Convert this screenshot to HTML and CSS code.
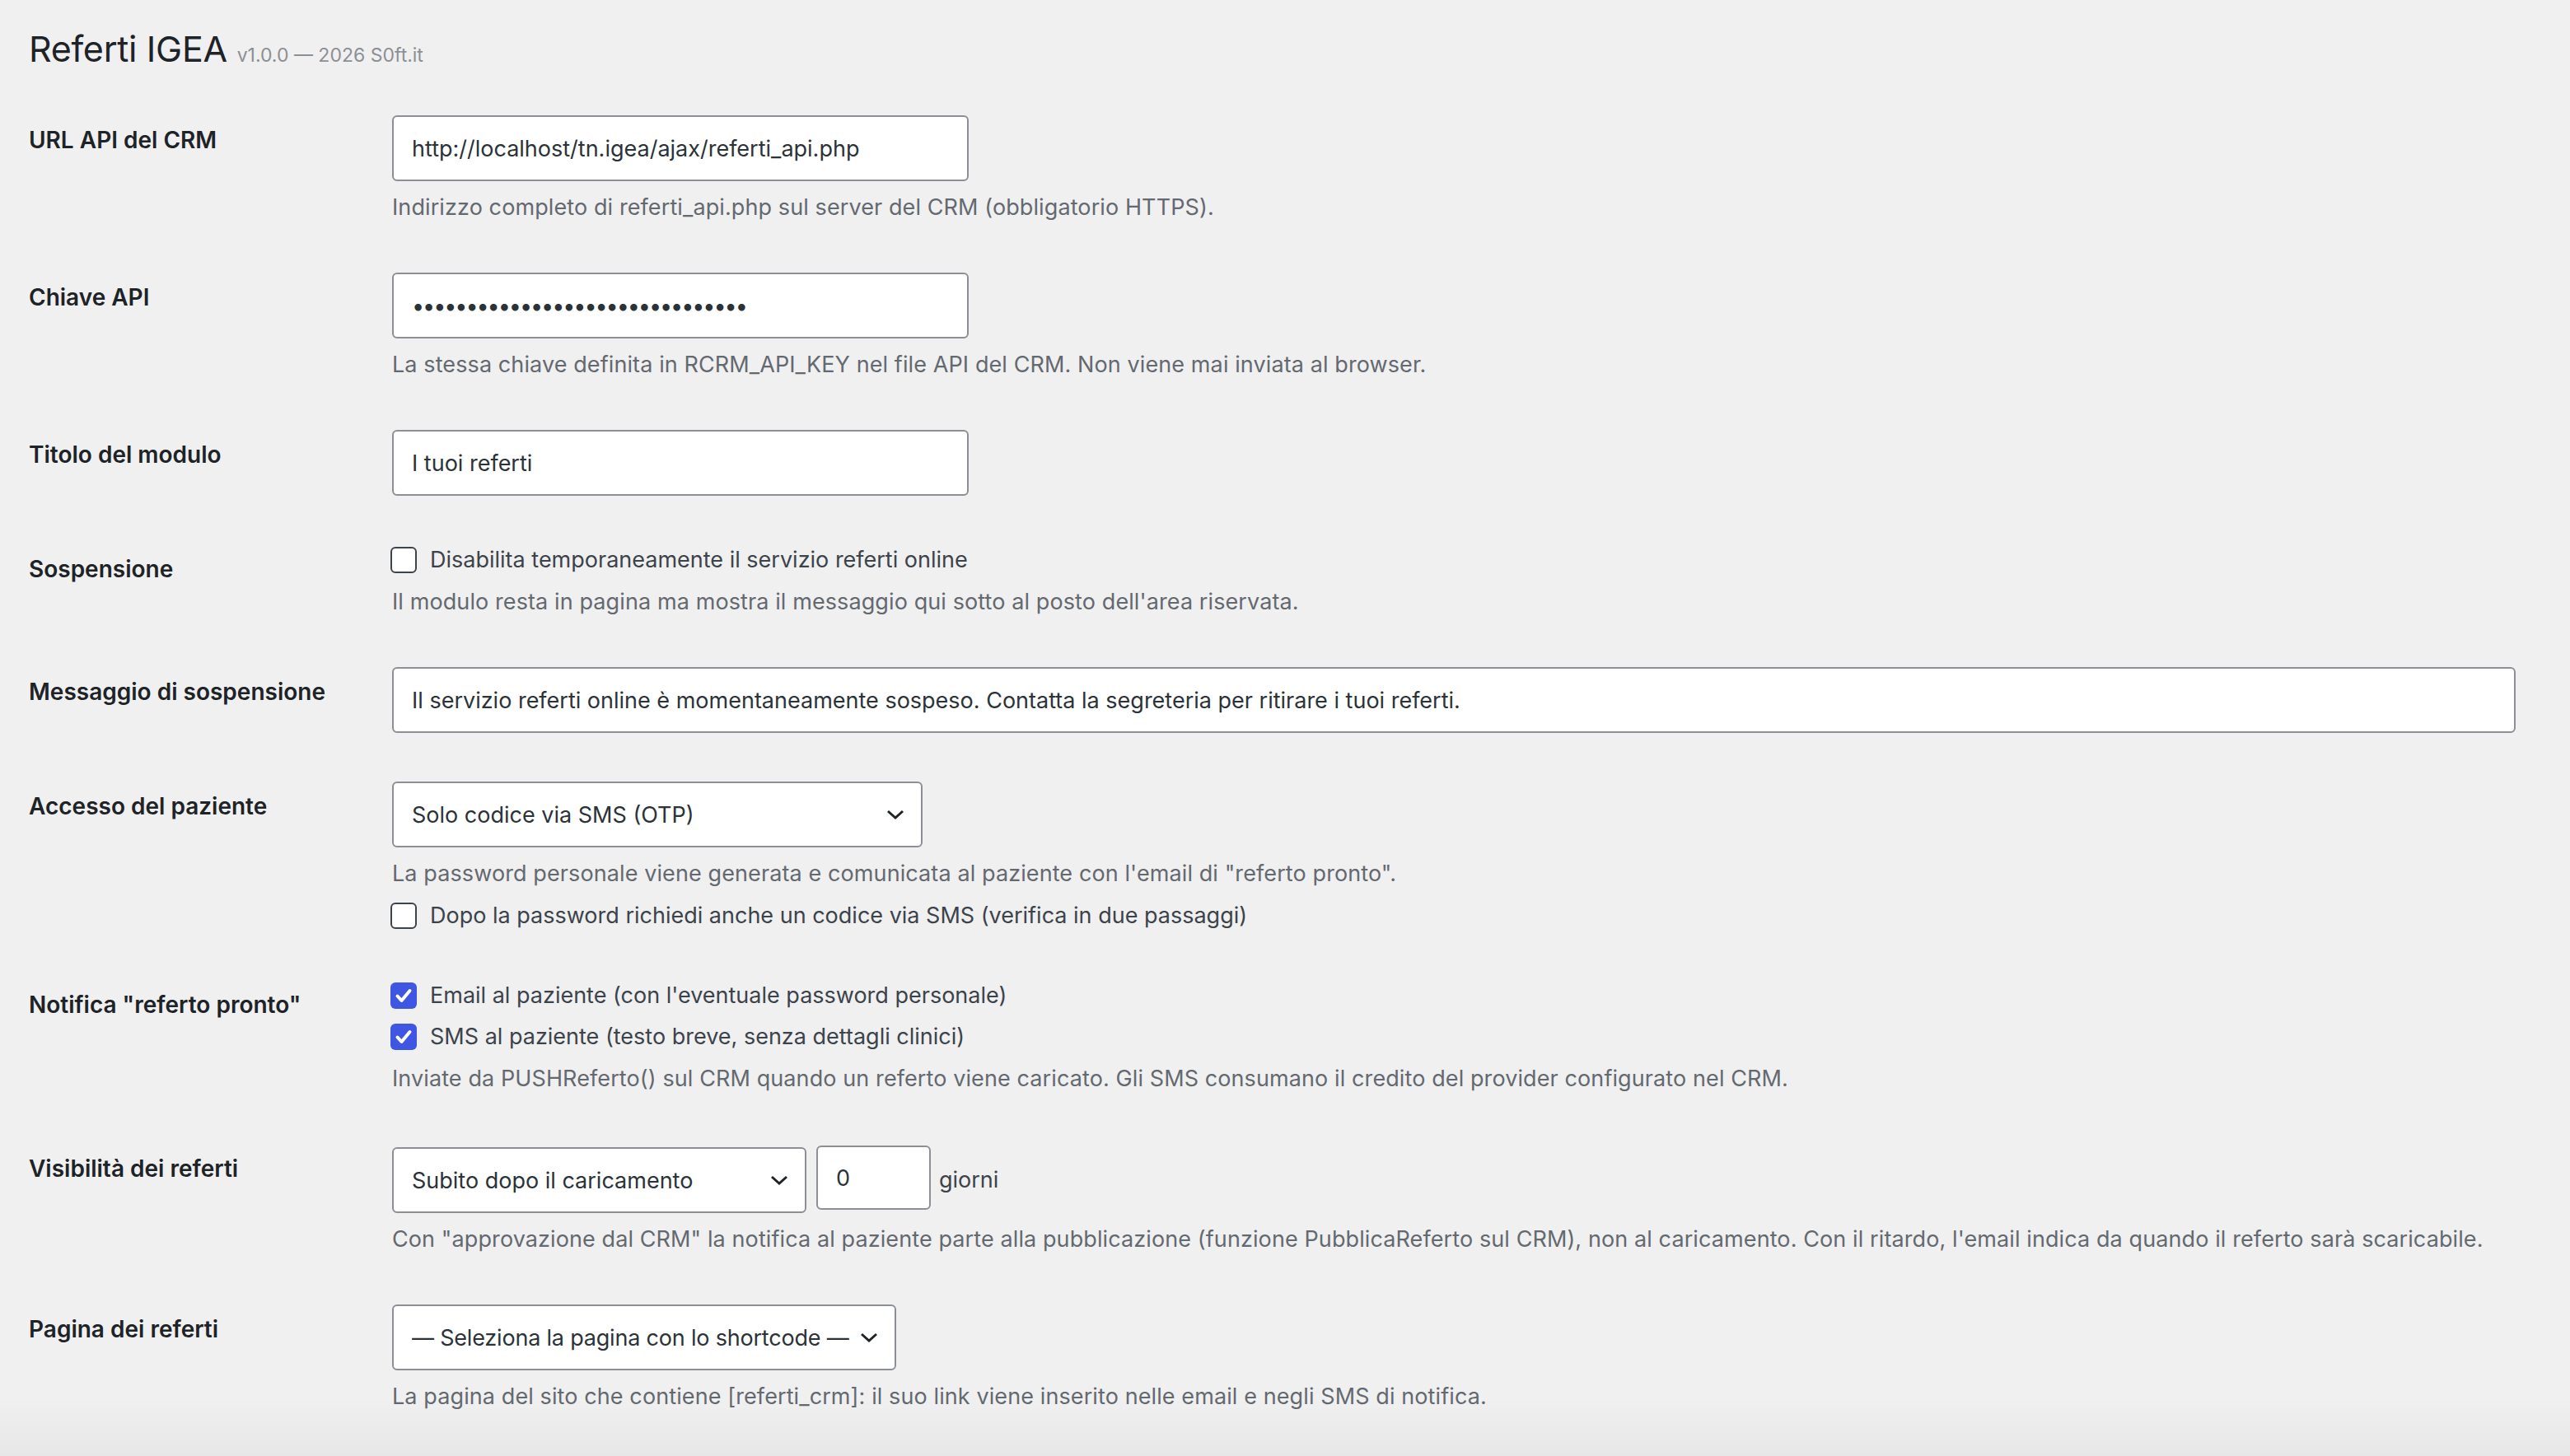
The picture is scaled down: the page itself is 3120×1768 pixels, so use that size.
FILE: index.html
```html
<!DOCTYPE html>
<html lang="it">
<head>
    <meta charset="UTF-8">
    <meta name="viewport" content="width=device-width, initial-scale=1.0">
    <title>Referti IGEA</title>
    <link rel="stylesheet" href="styles.css">
</head>
<body>
    <div class="wrap">
        <h1>Referti IGEA <span class="version">v1.0.0 — 2026 S0ft.it</span></h1>

        <form class="form-table">
            <div class="row">
                <label class="th" for="apiUrl">URL API del CRM</label>
                <div class="td">
                    <input id="apiUrl" type="text" class="regular-text" value="http://localhost/tn.igea/ajax/referti_api.php">
                    <p class="description">Indirizzo completo di referti_api.php sul server del CRM (obbligatorio HTTPS).</p>
                </div>
            </div>

            <div class="row">
                <label class="th" for="apiKey">Chiave API</label>
                <div class="td">
                    <input id="apiKey" type="password" class="regular-text secret" value="abcdefghijklmnopqrstuvwxyz01234">
                    <p class="description">La stessa chiave definita in RCRM_API_KEY nel file API del CRM. Non viene mai inviata al browser.</p>
                </div>
            </div>

            <div class="row">
                <label class="th" for="titolo">Titolo del modulo</label>
                <div class="td">
                    <input id="titolo" type="text" class="regular-text" value="I tuoi referti">
                </div>
            </div>

            <div class="row">
                <span class="th">Sospensione</span>
                <div class="td">
                    <label class="check-line"><span class="check"></span>Disabilita temporaneamente il servizio referti online</label>
                    <p class="description">Il modulo resta in pagina ma mostra il messaggio qui sotto al posto dell'area riservata.</p>
                </div>
            </div>

            <div class="row">
                <label class="th" for="messaggio">Messaggio di sospensione</label>
                <div class="td">
                    <input id="messaggio" type="text" class="large-text" value="Il servizio referti online è momentaneamente sospeso. Contatta la segreteria per ritirare i tuoi referti.">
                </div>
            </div>

            <div class="row">
                <label class="th" for="accesso">Accesso del paziente</label>
                <div class="td">
                    <div class="select-wrap select-access">
                        <select id="accesso">
                            <option>Solo codice via SMS (OTP)</option>
                            <option>Password personale</option>
                        </select>
                        <svg class="chevron" viewBox="0 0 22 12"><path d="M2 2l9 8 9-8"/></svg>
                    </div>
                    <p class="description">La password personale viene generata e comunicata al paziente con l'email di "referto pronto".</p>
                    <label class="check-line spaced"><span class="check"></span>Dopo la password richiedi anche un codice via SMS (verifica in due passaggi)</label>
                </div>
            </div>

            <div class="row">
                <span class="th">Notifica "referto pronto"</span>
                <div class="td">
                    <label class="check-line"><span class="check on"><svg viewBox="0 0 32 32"><path d="M8.5 16.5l5 5.5 10-12"/></svg></span>Email al paziente (con l'eventuale password personale)</label>
                    <label class="check-line spaced"><span class="check on"><svg viewBox="0 0 32 32"><path d="M8.5 16.5l5 5.5 10-12"/></svg></span>SMS al paziente (testo breve, senza dettagli clinici)</label>
                    <p class="description">Inviate da PUSHReferto() sul CRM quando un referto viene caricato. Gli SMS consumano il credito del provider configurato nel CRM.</p>
                </div>
            </div>

            <div class="row">
                <label class="th" for="visibilita">Visibilità dei referti</label>
                <div class="td">
                    <div class="inline-fields">
                        <div class="select-wrap select-visibility">
                            <select id="visibilita">
                                <option>Subito dopo il caricamento</option>
                                <option>Dopo approvazione dal CRM</option>
                            </select>
                            <svg class="chevron" viewBox="0 0 22 12"><path d="M2 2l9 8 9-8"/></svg>
                        </div>
                        <input type="number" class="small-text" value="0">
                        <span class="unit">giorni</span>
                    </div>
                    <p class="description">Con "approvazione dal CRM" la notifica al paziente parte alla pubblicazione (funzione PubblicaReferto sul CRM), non al caricamento. Con il ritardo, l'email indica da quando il referto sarà scaricabile.</p>
                </div>
            </div>

            <div class="row">
                <label class="th" for="pagina">Pagina dei referti</label>
                <div class="td">
                    <div class="select-wrap select-page">
                        <select id="pagina">
                            <option>— Seleziona la pagina con lo shortcode —</option>
                        </select>
                        <svg class="chevron" viewBox="0 0 22 12"><path d="M2 2l9 8 9-8"/></svg>
                    </div>
                    <p class="description">La pagina del sito che contiene [referti_crm]: il suo link viene inserito nelle email e negli SMS di notifica.</p>
                </div>
            </div>
        </form>
    </div>
</body>
</html>
```

FILE: styles.css
```css
body {
    margin: 0;
    background-color: #f0f0f1;
    font-family: Inter, "Noto Sans", sans-serif;
    font-size: 27px;
    color: #3c434a;
}
body::after {
    content: "";
    position: fixed;
    left: 0;
    right: 0;
    bottom: 0;
    height: 70px;
    background: linear-gradient(rgba(0, 0, 0, 0), rgba(0, 0, 0, 0.035));
    pointer-events: none;
}
.wrap {
    padding: 29px 20px 0 35px;
}
h1 {
    margin: 0 0 13px 0;
    font-size: 43px;
    font-weight: 400;
    letter-spacing: -0.3px;
    line-height: 60px;
    color: #1d2327;
}
.version {
    font-size: 23px;
    letter-spacing: 0;
    color: #8c8f94;
}
.row {
    display: grid;
    grid-template-columns: 421px 1fr;
}
.th {
    padding: 42px 0 0 0;
    font-weight: 600;
    font-size: 28px;
    line-height: 36px;
    color: #1d2327;
}
.td {
    padding: 30px 20px 29px 20px;
}
.td > p {
    margin: 12px 0 0 0;
}
input[type="text"],
input[type="password"],
input[type="number"],
select {
    box-sizing: border-box;
    height: 80px;
    border: 2px solid #8c8f94;
    border-radius: 6px;
    background-color: #fff;
    font-family: inherit;
    font-size: 27px;
    color: #2c3338;
    padding: 0 22px;
    margin: 0;
    outline: none;
}
.regular-text {
    width: 700px;
}
.secret {
    letter-spacing: -2.1px;
}
.large-text {
    width: 99%;
}
.small-text {
    width: 139px;
    padding: 0 24px;
    -moz-appearance: textfield;
    appearance: textfield;
}
.small-text::-webkit-inner-spin-button,
.small-text::-webkit-outer-spin-button {
    -webkit-appearance: none;
    margin: 0;
}
.description {
    font-size: 27px;
    letter-spacing: 0.1px;
    line-height: 40px;
    color: #646970;
}
.select-wrap {
    position: relative;
    display: inline-block;
    vertical-align: top;
}
.select-wrap > select {
    -webkit-appearance: none;
    appearance: none;
    width: 100%;
    padding-right: 48px;
}
.select-access {
    width: 644px;
}
.select-visibility {
    width: 503px;
}
.select-page {
    width: 612px;
}
.select-page > select {
    padding-right: 10px;
    letter-spacing: -0.2px;
}
.chevron {
    position: absolute;
    right: 22px;
    top: 34px;
    width: 22px;
    height: 12px;
    fill: none;
    stroke: #1d2327;
    stroke-width: 3;
    pointer-events: none;
}
.inline-fields {
    display: flex;
    align-items: flex-start;
    margin-top: 4px;
}
.inline-fields > .small-text {
    margin-left: 12px;
    height: 78px;
    position: relative;
    top: -2px;
}
.unit {
    margin-left: 10px;
    line-height: 80px;
    color: #3c434a;
}
.check-line {
    display: flex;
    align-items: center;
    height: 38px;
    line-height: 38px;
    color: #3c434a;
}
.check-line.spaced {
    margin-top: 12px;
}
.check {
    box-sizing: border-box;
    flex: none;
    width: 32px;
    height: 32px;
    margin: 0 16px 0 -2px;
    border: 2px solid #3c434a;
    border-radius: 6px;
    background-color: #fff;
}
.check.on {
    border: none;
    background-color: #3e56e2;
}
.check.on > svg {
    display: block;
    width: 32px;
    height: 32px;
    fill: none;
    stroke: #fff;
    stroke-width: 4;
    stroke-linecap: round;
    stroke-linejoin: round;
}
```
